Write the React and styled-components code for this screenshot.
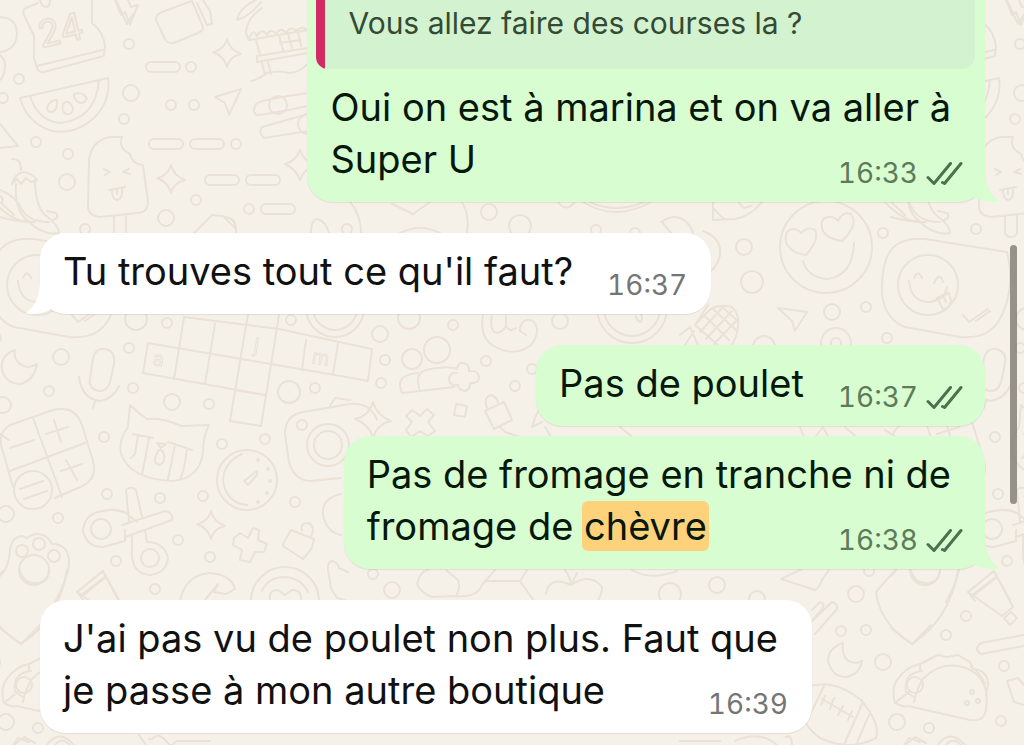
import React from "react";
import styled, { createGlobalStyle, css } from "styled-components";

const GlobalStyle = createGlobalStyle`
  *, *::before, *::after { box-sizing: border-box; }
  html, body, #root { margin: 0; min-height: 100vh; }
  body {
    background: #f5f1e9;
    font-family: Inter, "Liberation Sans", sans-serif;
    overflow: hidden;
  }
`;

const Screen = styled.div`
  position: relative;
  min-height: 100vh;
  overflow: hidden;
`;

const Wallpaper = styled.svg`
  position: absolute;
  inset: 0;
  width: 100%;
  height: 100%;
`;

const Thread = styled.main`
  position: relative;
  display: flex;
  flex-direction: column;
  gap: 31px;
  padding: 0 39px 11px 40px;
`;

const Group = styled.div`
  display: flex;
  flex-direction: column;
  align-items: flex-end;
  gap: 10px;
`;

const Bubble = styled.article`
  position: relative;
  display: grid;
  align-self: ${(p) => (p.$sent ? "flex-end" : "flex-start")};
  grid-template-columns: ${(p) => (p.$inline ? "auto auto" : "minmax(0, 1fr)")};
  column-gap: 34px;
  max-width: 100%;
  border-radius: ${(p) => (p.$cut ? "0 0 26px 26px" : "26px")};
  background: ${(p) => (p.$sent ? "#d8fdd1" : "#ffffff")};
  color: ${(p) => (p.$sent ? "#06180a" : "#111111")};
  box-shadow: 0 1px 1px rgba(90, 80, 60, 0.12);
`;

const Quote = styled.blockquote`
  margin: 0 10px 0 9px;
  padding: 4px 24px 27px 32px;
  border-radius: 0 0 14px 12px;
  background: linear-gradient(to right, #d32a66 9px, #d3f2cf 9px);
  color: #344a34;
  font-size: 30px;
  line-height: 38px;
`;

const Text = styled.p`
  grid-column: 1;
  grid-row: ${(p) => p.$row || 1};
  margin: 0;
  padding: 12px ${(p) => (p.$inline ? 0 : 34)}px 17px 23px;
  font-size: 38px;
  line-height: 52px;
  white-space: nowrap;
`;

const Found = styled.mark`
  margin: 0 -2px;
  padding: 2px;
  border-radius: 6px;
  background: #fdd27b;
  color: inherit;
`;

const Meta = styled.footer`
  grid-column: ${(p) => (p.$inline ? 2 : 1)};
  grid-row: ${(p) => p.$row || 1};
  place-self: end;
  display: flex;
  align-items: center;
  gap: 8px;
  padding: 0 ${(p) => (p.$sent ? 22 : 24)}px 12px 0;
  color: ${(p) => (p.$sent ? "#5d7a5b" : "#757575")};
  font-size: 28px;
  font-variant-numeric: tabular-nums;
  line-height: 34px;
`;

const Checks = styled.svg`
  width: 37px;
  height: 25px;
  fill: none;
  stroke: #4d704e;
  stroke-width: 3;
  stroke-linecap: round;
  stroke-linejoin: round;
`;

const TailShape = styled.svg`
  position: absolute;
  bottom: 0;
  width: 40px;
  height: 40px;
  ${(p) =>
    p.$sent
      ? css`
          right: -15px;
          fill: #d8fdd1;
        `
      : css`
          left: -15px;
          fill: #ffffff;
          transform: scaleX(-1);
        `}
`;

const ScrollThumb = styled.div`
  position: absolute;
  top: 245px;
  right: 7px;
  width: 7px;
  height: 259px;
  border-radius: 4px;
  background: rgba(120, 116, 108, 0.76);
`;

const Tail = ({ sent }) => (
  <TailShape $sent={sent} viewBox="0 0 40 40" aria-hidden="true">
    <path d="M25 6C25 22 30 33 39.500 39.500C30 41 21 39 15 35.500L5 26Z" />
  </TailShape>
);

const Stamp = ({ time, sent, inline, row }) => (
  <Meta $sent={sent} $inline={inline} $row={row}>
    <time>{time}</time>
    {sent && (
      <Checks viewBox="0 0 37 25" role="img" aria-label="Distribué">
        <path d="M2 16.500L8 22.500L24.500 2.500M16.500 21.500L18.500 22.500L35 2.500" />
      </Checks>
    )}
  </Meta>
);

const Message = ({ sent, inline, tail, time, children }) => (
  <Bubble $sent={sent} $inline={inline}>
    {tail && <Tail sent={sent} />}
    <Text $inline={inline}>{children}</Text>
    <Stamp time={time} sent={sent} inline={inline} />
  </Bubble>
);

const smallDots = [
  [129, 44], [191, 67], [19, 79], [171, 105], [194, 105], [124, 119], [36, 142],
  [68, 154], [3, 98], [236, 144], [196, 200], [249, 209], [85, 229], [347, 229],
  [596, 230], [635, 233], [866, 307], [883, 233], [887, 338], [129, 348],
  [49, 391], [167, 323], [133, 388], [209, 404], [315, 388], [291, 320],
  [453, 325], [385, 360], [381, 383], [486, 361], [532, 369], [515, 386],
  [104, 437], [222, 444], [265, 439], [107, 494], [160, 498], [203, 496],
  [295, 502], [58, 518], [178, 540], [116, 561], [210, 557], [155, 589],
  [373, 574], [841, 631], [866, 630], [966, 616], [946, 635], [1004, 666],
  [929, 728], [1001, 721], [869, 571], [302, 425],
];
const mediumDots = [
  [131, 93], [67, 182], [166, 218], [489, 212], [744, 247], [832, 312],
  [61, 357], [172, 402], [560, 321], [380, 334], [3, 405], [6, 514],
  [392, 590], [717, 585], [757, 599], [856, 594], [883, 662], [897, 722],
];
const largeDots = [
  [520, 226], [752, 282], [136, 319], [289, 392], [409, 318], [764, 347], [670, 594],
];
const pills = [
  [146, 62], [149, 139], [190, 139], [205, 175], [246, 175], [261, 204],
];
const stars = [
  [227, 53, 14], [171, 179, 14], [300, 165, 15], [373, 420, 18], [211, 525, 14],
];

const starPath = (x, y, r) => {
  const k = Math.round(r * 0.3);
  return `M${x} ${y - r}Q${x + k - 1} ${y - k + 1} ${x + r} ${y + 1}Q${x + k - 1} ${y + k - 1} ${x} ${y + r}Q${x - k + 1} ${y + k - 1} ${x - r} ${y - 1}Q${x - k + 1} ${y - k + 1} ${x} ${y - r}Z`;
};

const drawings = [
  // birthday bag, bolt, jug
  "M0 17Q17 18 17 34Q16 50 0 52M0 55Q6 60 5 67Q5 75 0 80",
  "M40 0Q42 9 49 6L50 0M38 3L26 8Q22 10 24 15L34 36V58L37 68Q39 73 44 72L104 56L105 46Q103 31 92 23V0M37 66L103 50",
  "M115 0L121 15L125 12L130 25L138 5L131 7L128 0",
  "M156 20Q155 15 162 12L192 1L203 27Q204 30 198 33L174 43Q167 44 165 39ZM197 3L207 25L212 24L210 11L203 0",
  // banana and castle
  "M237 20Q239 8 256 0M237 20Q250 16 261 2M246 33Q247 18 262 8M246 33L249 40L308 30M250 37Q253 28 257 36Q262 27 267 35Q271 27 276 34Q281 26 286 33Q291 25 296 31Q301 25 308 30M256 40L260 55M257 56L308 48M257 62L308 53M257 56V62M279 36L283 50M288 34L292 48M298 32L301 46M280 43L301 40M262 63L265 75M268 62L271 74M251 81Q260 79 266 73Q280 70 288 73Q300 73 308 63",
  // melon slice
  "M20 98L108 78Q111 100 95 117Q76 135 52 131Q27 123 20 98ZM30 96Q38 121 60 123Q96 119 99 80M47 108Q50 99 57 100Q58 111 52 112Q47 112 47 108ZM63 104Q68 98 73 108Q73 115 66 114Q61 111 63 104ZM74 94Q83 91 87 99Q83 105 78 102Q73 98 74 94Z",
  "M0 124L18 146L0 148",
  "M215 97L241 89L229 115L225 103Z",
  "M256 104Q263 99 308 93M256 115Q265 115 308 106M256 104Q252 111 256 115M262 127L308 114M264 138L308 131M262 127Q258 133 264 138",
  // ice lolly
  "M89 160Q92 140 110 137L122 137Q118 148 130 154Q132 164 143 165L148 202Q148 212 138 213L100 217Q88 216 88 206ZM114 217V233Q116 237 120 237Q125 237 126 233V216M104 169L110 172L105 175M129 169L123 172L130 174M109 190L125 187M112 190Q112 199 117 200Q123 199 122 188M117 189V194",
  // chilli
  "M12 159Q21 158 21 170M12 184Q15 173 24 172Q32 173 37 180M12 184L17 179L21 184L26 178L31 182L37 180M16 184Q14 210 28 221Q43 236 59 233Q59 225 45 215Q35 205 35 181M0 190Q16 196 22 210Q30 222 49 222M0 217Q17 222 32 222M47 211L56 213Q60 218 53 220M0 196Q4 198 2 203",
  // strip above the second message
  "M194 233L212 215L223 216L236 229V233M225 217Q236 218 236 230M311 233Q311 219 318 219Q326 222 329 233",
  "M350 202Q361 215 361 233M392 204L413 214L430 202M400 233Q420 223 440 233M462 202Q470 215 467 233M583 202Q615 222 651 202M590 202Q615 214 644 202M558 202Q566 213 575 202M661 222Q674 213 684 220Q693 227 694 238M662 222L671 233",
  "M713 202V220L735 219Q751 216 762 202M713 208L724 219M739 203L744 208L751 206M703 231Q722 238 720 255Q718 265 710 272",
  // hearts for eyes
  "M803 261Q808 278 828 279Q853 275 854 243M786 242Q784 230 793 229Q798 229 801 233Q808 226 815 230Q820 239 806 255Q790 253 786 242ZM822 228Q820 218 828 217Q834 216 838 221Q843 211 851 214Q859 225 842 241Q824 238 822 228Z",
  "M885 202Q905 224 926 222M891 202L905 215",
  // grinning sticker
  "M882 285C883 250 895 237 925 239L1007 252Q1014 278 1006 305C998 331 983 339 960 337L905 327C887 320 881 303 882 285ZM909 281Q911 302 929 302Q945 300 947 287M914 278Q918 269 922 278M934 283Q940 271 943 282M937 298L949 293L951 301Q950 309 943 309ZM943 295L946 302M963 315L969 322L988 309M976 321L990 311",
  "M778 308L807 312L795 331L792 321Z",
  // corn cob
  "M695 325Q705 314 711 309Q719 304 732 307Q740 315 738 325Q738 334 732 345M695 325L718 345M704 315L729 340M713 309L736 330M722 307L738 321M694 331L685 345M695 325L708 305M700 332L722 308M706 339L732 311M714 344L738 319M680 335L690 327L698 345",
  // moon, microphone
  "M15 350Q0 355 2 370Q6 384 21 384Q34 380 37 364Q28 370 20 364Q13 358 15 350Z",
  "M93 358Q96 347 106 349Q116 352 114 364L110 382Q107 392 98 391Q88 388 90 378ZM79 377Q82 399 100 401Q113 399 119 386M95 401L93 408",
  // crossword
  "M148 343L335 375L368 381L372 349L279 329L184 317M148 343L143 373L265 395M184 317L174 379M215 324L205 384M248 314L230 421L261 426L279 315M306 340L302 370M338 343L333 375M234 390L265 395",
  // team and puzzle piece
  "M402 393Q395 377 412 374L418 373M402 393L420 391M420 391Q414 373 426 370Q450 365 457 369M420 391L454 387M457 369Q458 362 464 363Q470 365 469 371Q479 370 479 378Q478 384 470 383Q470 391 464 391Q458 389 458 385Q449 386 449 379Q450 372 457 373",
  // fist
  "M483 315Q479 338 494 346Q515 358 531 345Q540 333 536 325Q533 319 526 320Q520 322 520 331L526 335M492 316Q489 331 497 333Q505 331 506 325Q509 333 516 328M506 325V316",
  "M636 316Q637 322 641 322Q643 319 641 314",
  // plus, gem, padlock
  "M406 416L412 410L420 416L427 409L434 415L428 422L435 431L428 436L420 431L411 437L406 430L412 422Z",
  "M456 404L467 406L465 417L454 415ZM485 411L504 402L512 420L494 429ZM487 408Q483 397 491 395Q498 397 498 404",
  "M532 427Q537 410 543 405M532 427L542 422",
  // calculator
  "M10 425L50 411Q74 403 82 425L93 461Q98 480 80 487L55 498M10 425Q-4 434 3 452L13 487M33 418L62 497M10 471L85 443M10 448L34 440M46 434L68 427M54 420L61 442M61 471L82 464M66 460L77 480M20 489L43 481M24 499L47 491",
  // weeping cat
  "M130 405Q138 413 147 419Q162 417 181 426L209 425Q203 437 203 452Q200 479 172 481Q130 479 121 454Q118 440 128 427ZM133 434L153 438M138 435L135 454L131 458M149 438L145 460L142 474M168 442L192 450M175 444L171 465L168 479M187 449L184 468L180 480M157 443L166 444L161 448ZM157 453Q152 464 160 465Q167 461 163 452Q160 447 157 453",
  // gauge
  "M242 454Q224 462 223 480Q226 503 247 505M244 481L257 471L257 475L248 485Z",
  // camera
  "M341 478L310 481Q294 480 289 462L285 434Q285 415 303 412L350 404Q370 402 377 420M330 406L335 398L350 400",
  // scissors
  "M137 522L126 513Q116 508 103 511M103 511Q85 513 83 530Q86 547 103 547L125 541V530M122 525L165 511Q174 513 172 520L125 537M129 521L126 490Q131 485 136 490L142 517M132 535V548Q130 574 150 575Q167 573 168 557Q163 542 147 542L145 530",
  // cross, tag
  "M234 538L240 533L248 538L253 528L259 530L258 540L267 544L264 552L255 552L250 562L240 560L242 550L233 545ZM284 542L291 530L314 539L312 548L303 559L283 546ZM302 530Q300 523 308 523Q316 526 311 536",
  "M341 494Q322 498 323 514Q326 532 341 535",
  // paw
  "M0 576Q9 569 10 549Q12 537 22 536L27 538Q37 530 48 538L52 544Q70 544 69 565Q67 580 55 602M0 628L21 644L40 625",
  "M77 592L103 571L106 577L81 597ZM106 577L119 600M81 597L84 601M180 601Q185 575 210 573Q232 575 235 589L226 594L214 592L218 584L205 600M270 601Q268 590 278 590L285 595L292 590Q302 590 301 601",
  "M328 570Q327 562 332 561Q338 562 339 568L348 572M328 570L331 588L337 598L345 600",
  "M262 591Q268 577 285 577Q301 578 308 592",
  // strip below the fourth message
  "M417 584Q421 570 428 570M417 584Q422 594 432 597L456 596Q461 588 458 580L446 570M456 596Q477 598 482 585M482 585L495 570M485 581L520 581L534 601M520 581L527 570M546 594Q549 575 571 585Q590 572 602 587Q602 593 598 601M571 585Q570 576 565 570M571 585L577 573M632 570Q650 581 677 571",
  "M781 579L802 569M781 579L815 590Q819 588 822 580L829 570M812 610L820 602Q826 604 822 609L811 622M815 634L837 609Q838 603 832 602L812 621",
  // bearded shape, cup
  "M895 570L876 592Q880 624 912 644Q950 619 958 570M911 570Q914 583 926 583Q939 583 940 570",
  "M968 592L994 571L1013 607L1002 616ZM971 596L997 576M1004 618L1011 612L1017 618L1010 625Z",
  "M843 643Q828 648 828 661Q832 677 846 677Q860 674 862 661Q854 665 847 660Q841 653 843 643Z",
  // taco
  "M895 703Q891 690 897 680Q907 666 920 664L938 655L947 657L958 655L970 662L973 669Q988 670 988 685L986 695M895 703Q905 708 908 706L970 720Q985 722 986 709Q991 676 963 667Q940 661 923 679Q916 690 914 702M906 692Q903 673 922 671M906 692L914 697M920 664V671M971 667Q980 672 985 684M895 703L910 691",
  "M981 643L1024 635M981 654L1024 646M981 643Q973 649 981 654M1007 681L1018 678L1024 685M1007 681L1014 702L1024 705",
  // rugby ball
  "M810 686Q835 679 861 700Q881 724 876 738Q850 752 820 738Q804 726 804 715M824 686L807 721M862 704L844 745M869 715L856 745M822 699L853 717M825 696L821 705M834 698L830 709M843 706L838 715M852 711L848 720",
  "M680 741H720M735 741Q760 730 777 745M786 737Q792 734 792 745M904 745L909 738L920 742M938 745Q950 728 965 745M149 739H152Q158 733 163 738L170 745M172 745L177 741H210M139 735L146 745",
  "M14 745L24 737L35 743M55 745Q62 736 70 745",
  "M1007 0L1018 24L1024 14",
  "M545 427L553 440M620 427L635 439M800 427L805 440M815 437L823 427L830 440M845 427L860 440M885 430L900 440M500 427L505 432L520 437",
];

const Doodles = () => (
  <Wallpaper aria-hidden="true">
    <defs>
      <g
        id="doodles"
        fill="none"
        stroke="#eae1d7"
        strokeWidth="2"
        strokeLinejoin="round"
        strokeLinecap="round"
      >
        {smallDots.map(([x, y]) => <circle key={`${x}-${y}`} cx={x} cy={y} r="5" />)}
        {mediumDots.map(([x, y]) => <circle key={`${x}-${y}`} cx={x} cy={y} r="8" />)}
        {largeDots.map(([x, y]) => <circle key={`${x}-${y}`} cx={x} cy={y} r="11" />)}
        {pills.map(([x, y]) => (
          <rect key={`${x}-${y}`} x={x} y={y} width="34" height="10" rx="5" />
        ))}
        {stars.map(([x, y, r]) => <path key={`${x}-${y}`} d={starPath(x, y, r)} />)}
        {drawings.map((d) => <path key={d} d={d} />)}
        <circle cx="826" cy="247" r="46" />
        <circle cx="928" cy="285" r="30" />
        <circle cx="836" cy="343" r="15" />
        <circle cx="836" cy="343" r="5" />
        <circle cx="278" cy="105" r="9" />
        <circle cx="308" cy="124" r="10" />
        <circle cx="412" cy="359" r="10" />
        <circle cx="437" cy="350" r="13" />
        <circle cx="632" cy="308" r="35" />
        <circle cx="632" cy="308" r="28" />
        <circle cx="335" cy="308" r="29" />
        <circle cx="335" cy="308" r="22" />
        <circle cx="33" cy="490" r="19" />
        <circle cx="247" cy="480" r="30" />
        <circle cx="258" cy="460" r="1" />
        <circle cx="268" cy="469" r="1" />
        <circle cx="270" cy="481" r="1" />
        <circle cx="267" cy="493" r="1" />
        <circle cx="258" cy="502" r="1" />
        <circle cx="328" cy="445" r="21" />
        <circle cx="328" cy="445" r="14" />
        <circle cx="101" cy="529" r="10" />
        <circle cx="150" cy="558" r="9" />
        <circle cx="34" cy="570" r="15" />
        <circle cx="22" cy="551" r="6" />
        <circle cx="39" cy="544" r="6" />
        <circle cx="54" cy="556" r="6" />
        <circle cx="285" cy="601" r="34" />
        <circle cx="915" cy="685" r="8" />
        <circle cx="972" cy="692" r="2" />
        <circle cx="978" cy="701" r="2" />
        <circle cx="967" cy="703" r="2" />
        <text x="41" y="48" fontSize="37" fontFamily="Inter, sans-serif" transform="rotate(-13 41 48)">24</text>
        <text x="152" y="365" fontSize="20" fontFamily="Inter, sans-serif" transform="rotate(9 152 365)" strokeWidth="1">a</text>
        <text x="253" y="352" fontSize="20" fontFamily="Inter, sans-serif" transform="rotate(9 253 352)" strokeWidth="1">j</text>
        <text x="311" y="363" fontSize="20" fontFamily="Inter, sans-serif" transform="rotate(9 311 363)" strokeWidth="1">m</text>
      </g>
      <pattern id="wallpaper" width="891" height="745" patternUnits="userSpaceOnUse">
        <use href="#doodles" x="-891" />
        <use href="#doodles" />
        <use href="#doodles" x="891" />
      </pattern>
    </defs>
    <rect width="100%" height="100%" fill="url(#wallpaper)" />
  </Wallpaper>
);

export default function App() {
  return (
    <Screen>
      <GlobalStyle />
      <Doodles />
      <Thread>
        <Bubble $sent $cut>
          <Tail sent />
          <Quote>Vous allez faire des courses la ?</Quote>
          <Text $row={2}>
            Oui on est à marina et on va aller à
            <br />
            Super U
          </Text>
          <Stamp time="16:33" sent row={2} />
        </Bubble>
        <Message inline tail time="16:37">
          Tu trouves tout ce qu'il faut?
        </Message>
        <Group>
          <Message sent inline time="16:37">
            Pas de poulet
          </Message>
          <Message sent tail time="16:38">
            Pas de fromage en tranche ni de
            <br />
            fromage de <Found>chèvre</Found>
          </Message>
        </Group>
        <Message time="16:39">
          J'ai pas vu de poulet non plus. Faut que
          <br />
          je passe à mon autre boutique
        </Message>
      </Thread>
      <ScrollThumb />
    </Screen>
  );
}
